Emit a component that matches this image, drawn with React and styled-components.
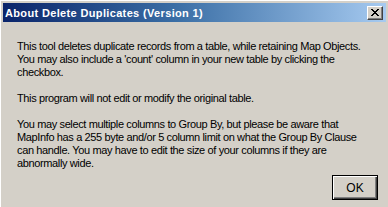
import styled, { createGlobalStyle } from "styled-components";

const GlobalStyle = createGlobalStyle`
  html, body {
    margin: 0;
    padding: 0;
    background: #d4d0c8;
  }
`;

const Window = styled.div`
  width: 388px;
  height: 207px;
  box-sizing: border-box;
  padding: 2px;
  background: #d4d0c8;
  border-top: 1px solid #ffffff;
  border-left: 1px solid #ffffff;
  display: flex;
  flex-direction: column;
  overflow: hidden;
  font-family: Tahoma, "Liberation Sans", Arial, sans-serif;
`;

const TitleBar = styled.div`
  height: 19px;
  flex-shrink: 0;
  display: flex;
  align-items: center;
  justify-content: space-between;
  padding: 0 3px 0 2px;
  background: linear-gradient(to right, #0a246a 0%, #3a6ea5 45%, #a6caf0 100%);
`;

const Title = styled.span`
  color: #ffffff;
  font-weight: bold;
  font-size: 11px;
  letter-spacing: 0.35px;
`;

const CloseButton = styled.div`
  width: 16px;
  height: 14px;
  box-sizing: border-box;
  background: #d4d0c8;
  border: 1px solid;
  border-color: #ffffff #404040 #404040 #ffffff;
  box-shadow: inset -1px -1px 0 #808080;
  display: flex;
  align-items: center;
  justify-content: center;
`;

const Body = styled.div`
  flex: 1;
  display: flex;
  flex-direction: column;
  padding: 18px 8px 5px 14px;
`;

const Text = styled.p`
  margin: 0 0 13px;
  font-size: 11px;
  line-height: 13px;
  letter-spacing: -0.37px;
  white-space: nowrap;
  color: #000000;

  &:last-of-type {
    margin-bottom: 0;
  }
`;

const Footer = styled.div`
  display: flex;
  justify-content: flex-end;
  margin-top: auto;
`;

const OkButton = styled.button`
  width: 46px;
  height: 25px;
  box-sizing: border-box;
  background: #d4d0c8;
  border: 1px solid #000000;
  box-shadow: inset 1px 1px 0 #ffffff, inset -1px -1px 0 #404040,
    inset -2px -2px 0 #808080;
  font-family: Tahoma, "Liberation Sans", Arial, sans-serif;
  font-size: 12px;
  color: #000000;
  padding: 0;
`;

const CloseIcon = () => (
  <svg width="8" height="7" viewBox="0 0 8 7">
    <path
      d="M0 0h2v1h1v1h2V1h1V0h2v1H7v1H6v1H5v1h1v1h1v1h1v1H6V6H5V5H3v1H2v1H0V6h1V5h1V4h1V3H2V2H1V1H0z"
      fill="#000"
    />
  </svg>
);

export default function App() {
  return (
    <>
      <GlobalStyle />
      <Window>
        <TitleBar>
          <Title>About Delete Duplicates (Version 1)</Title>
          <CloseButton>
            <CloseIcon />
          </CloseButton>
        </TitleBar>
        <Body>
          <Text>
            This tool deletes duplicate records from a table, while retaining
            Map Objects.
            <br />
            You may also include a 'count' column in your new table by clicking
            the
            <br />
            checkbox.
          </Text>
          <Text>This program will not edit or modify the original table.</Text>
          <Text>
            You may select multiple columns to Group By, but please be aware
            that
            <br />
            MapInfo has a 255 byte and/or 5 column limit on what the Group By
            Clause
            <br />
            can handle. You may have to edit the size of your columns if they
            are
            <br />
            abnormally wide.
          </Text>
          <Footer>
            <OkButton>OK</OkButton>
          </Footer>
        </Body>
      </Window>
    </>
  );
}
